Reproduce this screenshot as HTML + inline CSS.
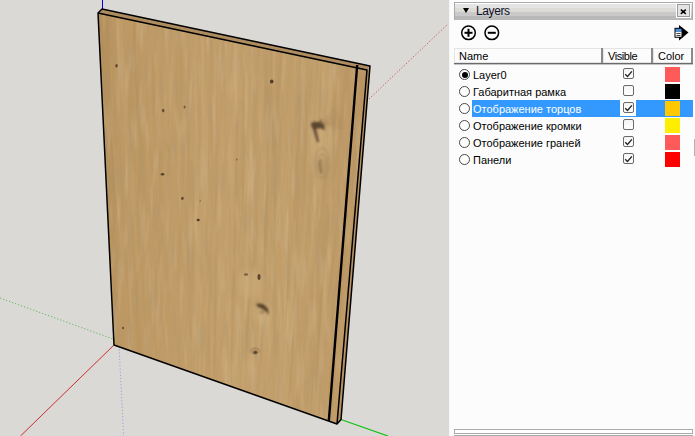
<!DOCTYPE html>
<html><head><meta charset="utf-8">
<style>
*{margin:0;padding:0;box-sizing:border-box}
html,body{width:695px;height:436px;overflow:hidden;background:#fcfcfc;font-family:"Liberation Sans",sans-serif}
#vp{position:absolute;left:0;top:0;width:449px;height:436px;background:#dad9d5}
#sep{position:absolute;left:449px;top:0;width:1px;height:436px;background:#f6f6f6}
#panel{position:absolute;left:450px;top:0;width:245px;height:436px;background:#fcfcfc}
.abs{position:absolute}
#hdr{left:454px;top:2px;width:239px;height:18px;border:1px solid #ababab;border-bottom:none;background:linear-gradient(#fff 0,#fff 1px,#e4e4e4 1px,#e4e4e4 5px,#dcdbd6 5px,#dcdbd6 9px,#c9c9c9 9px,#c9c9c9 13px,#b9b9b9 13px,#b9b9b9 17px)}
#hdr .tri{position:absolute;left:7.5px;top:5px;width:0;height:0;border-left:3.5px solid transparent;border-right:3.5px solid transparent;border-top:5px solid #000}
#hdr .ttl{position:absolute;left:21px;top:0px;font-size:12px;letter-spacing:-0.4px;color:#10102a;line-height:16px}
#close{left:676px;top:3px;width:15px;height:15px;border:1px solid #fff;background:#e4e4e4;outline:1px solid #9a9a9a;outline-offset:-2px}
.txt{position:absolute;font-size:11px;line-height:13px;color:#000;white-space:nowrap}
#colhdr{left:454px;top:48px;width:239px;height:16px;border-bottom:1px solid #6a6a6a;box-shadow:0 1px 0 #c4c4c4}
.ch{position:absolute;top:0;height:15px;background:#fcfcfc;border:1px solid #e4e4e4}
.row{position:absolute;left:454px;width:239px;height:17px}
.radio{position:absolute;left:5px;top:3px;width:11px;height:11px;border-radius:50%;border:1px solid #474747;background:#fff}
.radio.on::after{content:"";position:absolute;left:1.5px;top:1.5px;width:6px;height:6px;border-radius:50%;background:#000}
.cb{position:absolute;left:169px;top:2px;width:11px;height:11px;border:1px solid #6a6a6a;border-radius:2px;background:linear-gradient(#f4f4f4,#fff)}
.sw{position:absolute;left:211px;top:1px;width:15px;height:15px}
.lbl{position:absolute;left:18px;top:2px;font-size:11px;line-height:15px;color:#000;white-space:nowrap;padding:0 1px}
</style></head><body>
<div id="vp">
<svg width="448" height="436" viewBox="0 0 448 436" style="position:absolute;left:0;top:0">
 <defs>
  <linearGradient id="wg" gradientUnits="userSpaceOnUse" x1="100" y1="0" x2="365" y2="0">
   <stop offset="0" stop-color="#b48f5c"/>
   <stop offset="0.07" stop-color="#bd9863"/>
   <stop offset="0.5" stop-color="#c39f6b"/>
   <stop offset="0.9" stop-color="#c09c68"/>
   <stop offset="1" stop-color="#b99462"/>
  </linearGradient>
 </defs>
 <!-- axes -->
 <line x1="102.5" y1="0" x2="102.5" y2="10" stroke="#0000e0" stroke-width="1"/>
 <line x1="114" y1="345" x2="20.5" y2="436" stroke="#c83030" stroke-width="1"/>
 <line x1="0" y1="298" x2="113" y2="339" stroke="#60b860" stroke-width="1" stroke-dasharray="1.2 2"/>
 <line x1="119" y1="346" x2="123.6" y2="436" stroke="#a0a0e4" stroke-width="1" stroke-dasharray="1.2 2"/>
 <line x1="369" y1="99" x2="448" y2="24" stroke="#c85050" stroke-width="1" stroke-dasharray="1.2 2"/>
 <line x1="341" y1="419.5" x2="388" y2="436" stroke="#10c010" stroke-width="1.2"/>
 <!-- panel -->
 <polygon points="98,13 367,70 337,424 114,345" fill="url(#wg)"/>
<!--WOOD-->
<clipPath id="fc"><polygon points="98,13 367,70 337,424 114,345"/></clipPath>
<g clip-path="url(#fc)">
<path d="M183.6,83.7 L183.2,97.5 L182.8,111.3 L182.5,125.1 L182.2,138.9 L182.1,152.7 L182.1,166.6 L182.2,180.5 L182.4,194.4 L182.9,194.5 L183.2,180.8 L183.5,167.0 L183.8,153.2 L184.0,139.3 L184.2,125.5 L184.2,111.6 L184.2,97.7 L184.2,83.8Z" fill="#d8c090" opacity="0.06"/>
<path d="M215.1,119.8 L213.4,159.0 L211.4,198.1 L209.6,237.2 L208.4,276.5 L208.1,316.1 L208.6,355.9 L209.6,395.9 L210.5,436.0 L210.9,436.1 L210.2,396.1 L209.5,356.2 L209.2,316.4 L209.6,276.9 L210.7,237.6 L212.4,198.4 L214.1,159.2 L215.5,119.8Z" fill="#a6885a" opacity="0.10"/>
<path d="M257.5,6.0 L256.2,32.4 L254.8,58.7 L253.1,85.0 L251.5,111.2 L249.9,137.5 L248.5,163.8 L247.2,190.1 L246.3,216.5 L247.3,216.8 L249.2,190.6 L251.2,164.5 L253.2,138.3 L255.0,112.1 L256.6,85.7 L257.7,59.3 L258.3,32.8 L258.6,6.2Z" fill="#d8c090" opacity="0.06"/>
<path d="M324.5,4.8 L322.5,27.4 L320.5,49.9 L318.6,72.5 L316.9,95.1 L315.4,117.7 L314.0,140.4 L312.7,163.1 L311.6,185.8 L312.2,186.0 L313.9,163.4 L315.6,140.8 L317.3,118.2 L319.0,95.6 L320.6,72.9 L322.2,50.3 L323.7,27.6 L325.1,4.9Z" fill="#d8c090" opacity="0.12"/>
<path d="M276.5,152.1 L275.6,171.6 L275.1,191.2 L274.7,210.8 L274.3,230.4 L273.7,249.9 L272.8,269.4 L271.7,288.8 L270.5,308.2 L271.6,308.5 L273.7,289.4 L275.6,270.2 L277.0,250.9 L277.9,231.4 L278.1,211.7 L278.0,191.9 L277.7,172.1 L277.7,152.4Z" fill="#a6885a" opacity="0.11"/>
<path d="M251.9,77.8 L250.5,117.0 L249.0,156.2 L247.6,195.3 L246.1,234.5 L244.7,273.7 L243.5,312.9 L242.4,352.2 L241.5,391.5 L242.6,391.9 L244.6,353.0 L246.7,313.9 L248.6,274.9 L250.3,235.7 L251.6,196.4 L252.5,157.0 L253.0,117.6 L253.3,78.1Z" fill="#d8c090" opacity="0.13"/>
<path d="M133.1,27.0 L133.0,64.9 L136.2,103.5 L139.0,142.1 L138.6,179.9 L137.3,217.4 L138.6,255.6 L142.7,294.7 L145.6,333.6 L146.7,333.9 L144.8,295.4 L141.7,256.6 L141.0,218.5 L142.6,181.0 L142.9,143.1 L139.5,104.3 L135.4,65.4 L134.4,27.3Z" fill="#a6885a" opacity="0.12"/>
<path d="M263.1,-6.8 L259.0,37.6 L253.6,81.7 L251.3,126.4 L252.7,172.0 L253.8,217.6 L251.4,262.3 L247.4,306.5 L245.6,351.3 L246.9,351.7 L249.9,307.3 L255.0,263.4 L258.1,218.8 L257.4,173.2 L255.9,127.5 L257.5,82.6 L261.9,38.2 L264.6,-6.5Z" fill="#a6885a" opacity="0.14"/>
<path d="M269.5,92.3 L267.8,110.7 L266.2,129.2 L265.0,147.7 L264.2,166.2 L263.8,185.0 L263.8,203.8 L264.1,222.7 L264.5,241.6 L266.7,242.3 L268.3,223.8 L269.7,205.4 L270.9,186.8 L271.7,168.2 L272.2,149.4 L272.3,130.6 L272.2,111.8 L271.9,92.9Z" fill="#d8c090" opacity="0.08"/>
<path d="M124.2,-29.1 L125.2,3.0 L125.5,35.0 L125.8,66.9 L126.8,99.0 L128.6,131.3 L130.5,163.6 L131.6,195.7 L132.2,227.7 L132.5,227.8 L132.3,195.9 L131.4,163.8 L129.7,131.5 L128.0,99.3 L126.9,67.1 L126.5,35.2 L126.0,3.2 L124.5,-29.0Z" fill="#d8c090" opacity="0.06"/>
<path d="M240.7,188.2 L239.4,220.7 L238.3,253.4 L237.4,286.0 L236.5,318.7 L235.7,351.5 L234.9,384.2 L234.3,417.0 L233.9,449.8 L235.6,450.5 L237.7,418.2 L239.7,385.9 L241.5,353.4 L242.7,320.7 L243.4,287.9 L243.4,254.9 L243.1,221.8 L242.7,188.7Z" fill="#d8c090" opacity="0.15"/>
<path d="M133.5,-45.1 L133.3,-13.5 L133.2,18.0 L133.4,49.7 L134.1,81.4 L135.3,113.3 L137.0,145.3 L138.9,177.3 L140.8,209.4 L141.4,209.6 L140.0,177.6 L138.5,145.7 L137.2,113.7 L136.1,81.9 L135.3,50.1 L134.8,18.4 L134.5,-13.3 L134.1,-45.0Z" fill="#a6885a" opacity="0.08"/>
<path d="M196.5,-21.3 L193.5,31.4 L192.6,84.6 L194.3,138.3 L194.7,191.8 L192.8,244.6 L192.3,297.8 L194.4,351.8 L195.8,405.7 L197.0,406.2 L196.7,352.6 L195.7,298.9 L197.0,245.8 L199.2,193.0 L198.7,139.4 L196.4,85.4 L196.3,32.0 L198.0,-21.0Z" fill="#d8c090" opacity="0.13"/>
<path d="M312.0,3.0 L310.5,19.1 L309.3,35.3 L308.4,51.5 L307.7,67.7 L307.2,84.0 L306.8,100.4 L306.4,116.7 L306.0,133.0 L308.1,133.5 L310.4,117.6 L312.4,101.6 L313.9,85.5 L314.8,69.3 L315.2,52.9 L315.1,36.5 L314.7,20.0 L314.2,3.5Z" fill="#d8c090" opacity="0.09"/>
<path d="M151.1,42.5 L151.1,56.0 L151.2,69.4 L151.3,82.9 L151.6,96.4 L151.9,110.0 L152.3,123.5 L152.8,137.1 L153.4,150.7 L153.9,150.8 L153.9,137.3 L153.8,123.9 L153.7,110.4 L153.5,96.9 L153.2,83.3 L152.7,69.8 L152.2,56.2 L151.7,42.6Z" fill="#a6885a" opacity="0.06"/>
<path d="M325.9,201.9 L322.6,236.9 L319.5,272.0 L316.9,307.1 L314.6,342.4 L312.7,377.8 L310.9,413.3 L309.3,448.9 L307.6,484.4 L308.9,484.9 L311.7,449.8 L314.4,414.5 L316.9,379.2 L319.2,343.9 L321.3,308.5 L323.3,273.1 L325.3,237.7 L327.4,202.3Z" fill="#a6885a" opacity="0.08"/>
<path d="M223.5,9.7 L223.0,23.5 L222.4,37.2 L221.8,50.9 L221.1,64.6 L220.6,78.4 L220.2,92.1 L220.1,105.9 L220.1,119.8 L221.4,120.1 L222.5,106.5 L223.6,92.9 L224.6,79.3 L225.4,65.6 L225.8,51.8 L225.8,37.9 L225.5,24.0 L224.8,10.0Z" fill="#a6885a" opacity="0.06"/>
<path d="M346.5,210.9 L343.6,239.3 L340.8,267.6 L338.2,296.0 L335.8,324.4 L333.7,352.9 L331.8,381.5 L329.9,410.1 L328.1,438.8 L329.2,439.2 L332.1,410.9 L334.9,382.6 L337.5,354.2 L339.9,325.7 L342.1,297.1 L344.1,268.5 L346.0,239.9 L347.8,211.3Z" fill="#a6885a" opacity="0.11"/>
<path d="M163.2,12.1 L163.8,57.0 L165.3,102.2 L166.9,147.4 L167.8,192.4 L167.9,237.2 L167.5,281.9 L167.5,326.7 L168.4,371.7 L169.3,372.0 L169.2,327.2 L169.9,282.7 L170.8,238.1 L171.0,193.3 L170.0,148.2 L168.0,102.8 L165.8,57.4 L164.3,12.3Z" fill="#a6885a" opacity="0.13"/>
<path d="M367.9,87.8 L365.5,101.9 L363.0,116.0 L360.6,130.1 L358.5,144.3 L356.7,158.5 L355.4,172.8 L354.4,187.2 L353.8,201.7 L355.7,202.2 L358.1,188.2 L360.6,174.1 L363.1,160.0 L365.2,145.9 L367.0,131.6 L368.4,117.3 L369.4,102.8 L370.0,88.3Z" fill="#d8c090" opacity="0.14"/>
<path d="M109.6,177.2 L107.9,205.0 L107.1,233.0 L109.1,261.8 L112.9,291.3 L116.2,320.6 L117.1,349.1 L116.3,377.0 L116.2,405.0 L116.9,405.3 L117.6,377.4 L119.0,349.7 L118.4,321.3 L115.4,292.1 L111.4,262.6 L109.1,233.6 L109.3,205.5 L110.4,177.5Z" fill="#a6885a" opacity="0.13"/>
<path d="M194.6,165.5 L193.9,188.5 L193.1,211.5 L192.7,234.5 L192.7,257.7 L193.2,281.0 L193.7,304.3 L194.1,327.6 L194.3,350.9 L194.9,351.1 L195.3,328.0 L195.4,304.9 L195.1,281.6 L194.9,258.3 L194.8,235.1 L194.9,212.0 L195.1,188.8 L195.3,165.7Z" fill="#a6885a" opacity="0.07"/>
<path d="M272.4,97.0 L272.3,116.1 L271.8,135.0 L270.8,153.9 L269.3,172.6 L267.5,191.3 L265.7,209.9 L264.3,228.6 L263.7,247.5 L265.4,248.0 L267.8,229.6 L270.6,211.2 L273.3,192.8 L275.5,174.2 L276.8,155.4 L276.9,136.3 L275.9,116.9 L274.3,97.4Z" fill="#a6885a" opacity="0.12"/>
<path d="M306.5,166.0 L305.7,183.6 L304.8,201.1 L303.6,218.6 L302.2,236.0 L300.6,253.3 L299.1,270.7 L297.9,288.2 L297.1,305.7 L297.9,306.0 L299.5,288.6 L301.4,271.4 L303.4,254.1 L305.1,236.8 L306.4,219.3 L307.2,201.7 L307.4,184.0 L307.4,166.2Z" fill="#d8c090" opacity="0.16"/>
<path d="M131.1,106.4 L131.3,128.2 L131.4,150.0 L131.9,171.8 L132.6,193.7 L133.7,215.7 L134.8,237.8 L135.9,259.8 L136.7,281.7 L137.2,281.9 L136.8,260.1 L136.2,238.2 L135.3,216.2 L134.3,194.2 L133.5,172.2 L132.9,150.3 L132.3,128.5 L131.6,106.5Z" fill="#d8c090" opacity="0.14"/>
<path d="M242.9,79.5 L243.0,122.6 L244.0,165.9 L241.7,208.4 L238.1,250.4 L237.6,293.3 L239.0,336.9 L237.8,379.7 L234.6,421.7 L235.0,421.8 L238.7,380.0 L240.2,337.3 L239.0,293.8 L239.7,250.9 L243.2,208.8 L245.3,166.2 L244.0,122.8 L243.4,79.7Z" fill="#a6885a" opacity="0.16"/>
<path d="M320.6,93.3 L319.1,111.0 L317.7,128.7 L316.4,146.4 L315.3,164.2 L314.4,182.0 L313.6,199.9 L312.9,217.8 L312.3,235.7 L312.9,235.9 L314.2,218.1 L315.4,200.3 L316.5,182.6 L317.6,164.8 L318.6,146.9 L319.5,129.1 L320.4,111.3 L321.3,93.5Z" fill="#a6885a" opacity="0.08"/>
<path d="M340.0,118.3 L337.9,149.1 L337.8,180.4 L337.3,211.6 L334.4,242.2 L329.8,272.3 L325.7,302.5 L324.0,333.5 L324.4,365.0 L325.2,365.3 L325.7,334.0 L328.1,303.2 L332.6,273.2 L337.5,243.1 L340.3,212.4 L340.3,181.0 L339.7,149.5 L341.0,118.6Z" fill="#a6885a" opacity="0.11"/>
<path d="M237.9,88.0 L236.9,124.8 L235.9,161.6 L235.0,198.4 L234.1,235.2 L233.3,272.0 L232.5,308.8 L231.7,345.7 L230.9,382.5 L231.2,382.6 L232.1,345.8 L233.1,309.1 L234.1,272.3 L235.0,235.4 L235.8,198.6 L236.6,161.8 L237.4,124.9 L238.1,88.1Z" fill="#a6885a" opacity="0.07"/>
<path d="M249.2,36.0 L249.1,60.1 L248.4,84.1 L247.0,107.8 L245.2,131.5 L243.2,155.1 L241.6,178.8 L240.7,202.7 L240.6,226.7 L241.5,227.0 L242.4,203.1 L244.0,179.4 L246.0,155.8 L248.2,132.2 L250.0,108.5 L250.9,84.6 L250.9,60.5 L250.1,36.2Z" fill="#a6885a" opacity="0.11"/>
<path d="M302.5,110.7 L299.9,140.2 L298.9,170.1 L298.9,200.3 L298.8,230.5 L297.8,260.5 L295.5,290.1 L292.4,319.4 L289.5,348.8 L290.7,349.2 L294.6,320.1 L298.6,291.0 L301.6,261.6 L302.9,231.6 L302.9,201.3 L302.3,171.0 L302.3,140.8 L303.8,111.0Z" fill="#d8c090" opacity="0.13"/>
<path d="M277.8,212.3 L275.1,229.7 L273.1,247.4 L272.2,265.3 L272.3,283.6 L273.1,302.0 L274.0,320.6 L274.5,339.0 L274.2,357.2 L275.3,357.5 L276.5,339.6 L276.8,321.5 L276.5,303.1 L275.9,284.6 L275.7,266.3 L276.1,248.2 L277.2,230.3 L279.0,212.6Z" fill="#a6885a" opacity="0.10"/>
<path d="M248.5,34.0 L247.0,49.6 L245.6,65.2 L244.5,80.9 L243.8,96.7 L243.5,112.5 L243.6,128.5 L244.0,144.5 L244.5,160.6 L246.6,161.1 L248.1,145.5 L249.5,129.9 L250.6,114.2 L251.3,98.4 L251.6,82.5 L251.6,66.5 L251.3,50.5 L250.8,34.4Z" fill="#d8c090" opacity="0.07"/>
<path d="M272.1,196.1 L270.8,229.4 L269.6,262.7 L268.3,295.9 L267.0,329.2 L265.6,362.4 L264.2,395.7 L262.7,428.9 L261.2,462.0 L262.7,462.6 L265.7,430.0 L268.5,397.2 L270.8,364.2 L272.6,331.0 L273.7,297.6 L274.2,264.0 L274.2,230.3 L273.9,196.6Z" fill="#d8c090" opacity="0.07"/>
<path d="M151.8,58.6 L152.6,88.5 L153.7,118.6 L154.8,148.6 L156.0,178.7 L157.1,208.8 L158.1,238.8 L158.8,268.8 L159.4,298.7 L161.4,299.4 L162.7,270.0 L163.6,240.4 L163.8,210.6 L163.1,180.6 L161.7,150.4 L159.5,120.0 L156.9,89.5 L154.1,59.1Z" fill="#a6885a" opacity="0.10"/>
<path d="M187.1,-31.7 L186.8,-3.7 L186.6,24.2 L186.4,52.2 L186.4,80.2 L186.6,108.2 L186.8,136.3 L187.2,164.3 L187.5,192.4 L188.2,192.6 L188.4,164.6 L188.5,136.7 L188.6,108.7 L188.6,80.7 L188.5,52.7 L188.4,24.6 L188.1,-3.5 L187.8,-31.5Z" fill="#a6885a" opacity="0.13"/>
<path d="M266.1,43.7 L265.4,58.2 L264.8,72.7 L264.3,87.3 L264.1,101.8 L264.0,116.5 L264.1,131.2 L264.3,145.9 L264.6,160.6 L265.8,160.9 L266.8,146.5 L267.6,132.0 L268.2,117.5 L268.5,102.9 L268.5,88.2 L268.3,73.5 L267.9,58.7 L267.4,44.0Z" fill="#a6885a" opacity="0.16"/>
<path d="M309.1,24.0 L306.5,77.1 L305.3,130.6 L304.1,184.1 L301.5,237.3 L297.3,290.1 L292.3,342.5 L288.0,395.1 L285.2,448.2 L285.9,448.5 L289.3,395.6 L294.2,343.2 L299.6,290.8 L304.1,238.0 L306.6,184.7 L307.4,131.1 L308.0,77.5 L309.9,24.2Z" fill="#a6885a" opacity="0.10"/>
<path d="M244.7,202.4 L243.2,227.2 L242.0,252.0 L241.1,277.0 L240.6,302.0 L240.5,327.2 L240.6,352.5 L241.0,377.9 L241.4,403.4 L242.8,403.9 L243.8,378.9 L244.6,353.9 L245.3,328.8 L245.7,303.6 L246.0,278.5 L246.2,253.2 L246.3,228.0 L246.4,202.8Z" fill="#a6885a" opacity="0.06"/>
<path d="M310.6,124.3 L307.3,166.1 L305.5,208.3 L304.6,250.8 L303.7,293.3 L301.8,335.5 L298.7,377.4 L294.7,418.9 L290.7,460.4 L291.0,460.5 L295.3,419.1 L299.6,377.7 L303.0,335.9 L305.0,293.6 L305.8,251.1 L306.5,208.6 L308.1,166.3 L311.0,124.4Z" fill="#d8c090" opacity="0.06"/>
<path d="M167.3,7.9 L167.4,33.1 L167.6,58.4 L167.8,83.7 L168.0,108.9 L168.3,134.2 L168.7,159.5 L169.2,184.8 L169.6,210.2 L170.1,210.3 L170.1,185.1 L170.0,159.9 L169.9,134.6 L169.7,109.3 L169.4,84.0 L169.0,58.7 L168.4,33.4 L167.8,8.0Z" fill="#a6885a" opacity="0.08"/>
<path d="M177.4,21.5 L176.6,34.6 L176.0,47.7 L175.6,60.9 L175.4,74.1 L175.7,87.4 L176.2,100.8 L176.9,114.3 L177.7,127.7 L179.5,128.2 L180.3,115.1 L181.0,102.0 L181.5,88.8 L181.6,75.5 L181.5,62.2 L181.0,48.8 L180.2,35.4 L179.3,21.9Z" fill="#a6885a" opacity="0.11"/>
<path d="M298.0,91.5 L294.1,121.2 L289.4,150.7 L286.2,180.5 L285.5,210.9 L286.5,241.9 L287.1,272.8 L285.9,303.1 L282.9,332.9 L284.1,333.3 L288.3,303.9 L290.6,273.8 L290.6,243.0 L289.9,212.1 L290.4,181.6 L293.1,151.6 L296.8,121.9 L299.5,91.8Z" fill="#a6885a" opacity="0.10"/>
<path d="M316.5,164.0 L316.5,194.5 L316.5,225.0 L314.5,255.1 L310.6,284.5 L306.2,313.8 L303.5,343.5 L303.1,374.0 L304.0,405.0 L304.9,405.3 L304.9,374.6 L306.0,344.3 L309.3,314.7 L313.9,285.5 L317.7,256.0 L319.2,225.7 L318.5,195.0 L317.5,164.2Z" fill="#a6885a" opacity="0.13"/>
<path d="M205.3,6.5 L204.8,22.7 L204.3,39.0 L203.9,55.2 L203.8,71.5 L203.8,87.9 L204.0,104.3 L204.3,120.7 L204.6,137.1 L205.6,137.4 L206.1,121.1 L206.5,104.9 L206.8,88.6 L207.0,72.3 L207.0,55.9 L206.9,39.5 L206.7,23.1 L206.4,6.7Z" fill="#a6885a" opacity="0.06"/>
<path d="M329.7,30.2 L326.6,62.5 L323.4,94.7 L320.2,127.0 L317.5,159.3 L315.4,191.8 L313.9,224.4 L312.9,257.2 L312.1,290.1 L314.0,290.7 L316.6,258.3 L319.1,225.8 L321.7,193.4 L324.3,161.0 L326.8,128.5 L329.0,96.0 L330.7,63.3 L331.9,30.6Z" fill="#d8c090" opacity="0.08"/>
<path d="M165.4,44.0 L164.7,56.5 L164.2,69.0 L163.9,81.6 L164.0,94.3 L164.5,107.0 L165.3,119.9 L166.3,132.8 L167.4,145.7 L169.6,146.3 L170.5,133.8 L171.2,121.3 L171.5,108.7 L171.5,96.0 L171.1,83.3 L170.2,70.4 L169.1,57.4 L167.7,44.5Z" fill="#d8c090" opacity="0.11"/>
<path d="M197.8,-12.5 L197.8,17.9 L198.1,48.3 L198.3,78.8 L198.5,109.2 L198.6,139.6 L198.4,170.0 L198.2,200.4 L197.8,230.7 L199.0,231.0 L200.4,201.0 L201.6,170.8 L202.4,140.6 L202.6,110.2 L202.3,79.7 L201.4,49.0 L200.3,18.4 L199.1,-12.3Z" fill="#a6885a" opacity="0.07"/>
<path d="M107.5,100.7 L110.4,132.6 L112.4,164.3 L112.9,195.5 L112.7,226.6 L113.2,257.8 L115.2,289.4 L118.1,321.4 L120.8,353.4 L121.0,353.5 L118.6,321.6 L115.8,289.7 L114.0,258.0 L113.6,226.8 L113.7,195.8 L113.1,164.5 L110.9,132.7 L107.8,100.8Z" fill="#a6885a" opacity="0.08"/>
<path d="M342.3,4.3 L337.6,56.6 L333.7,108.9 L330.3,161.5 L326.5,213.9 L322.3,266.2 L318.6,318.6 L315.7,371.3 L312.8,424.0 L313.7,424.3 L317.5,371.9 L321.2,319.4 L325.4,267.1 L329.9,214.8 L333.5,162.3 L336.5,109.6 L339.6,57.0 L343.4,4.5Z" fill="#a6885a" opacity="0.16"/>
<path d="M331.5,199.9 L328.8,231.2 L326.1,262.5 L323.4,293.8 L320.8,325.2 L318.4,356.5 L316.3,388.0 L314.5,419.6 L313.0,451.3 L314.3,451.8 L317.0,420.5 L319.9,389.2 L322.8,358.0 L325.5,326.6 L327.9,295.2 L330.0,263.6 L331.6,232.0 L333.0,200.3Z" fill="#d8c090" opacity="0.14"/>
<path d="M327.5,23.7 L325.1,52.6 L322.7,81.6 L320.3,110.5 L318.0,139.4 L315.9,168.4 L313.8,197.4 L311.9,226.5 L310.1,255.5 L311.5,255.9 L314.6,227.2 L317.6,198.4 L320.4,169.6 L322.9,140.6 L325.0,111.6 L326.7,82.4 L328.0,53.2 L329.0,24.0Z" fill="#d8c090" opacity="0.13"/>
<path d="M119.4,-48.0 L118.0,0.4 L118.5,49.2 L121.5,98.5 L125.0,147.9 L126.9,197.0 L127.4,245.7 L128.5,294.5 L131.6,344.0 L133.4,344.6 L131.9,295.6 L132.3,247.2 L132.9,198.7 L131.4,149.6 L127.7,100.0 L123.9,50.4 L122.0,1.3 L121.5,-47.6Z" fill="#d8c090" opacity="0.12"/>
<path d="M303.9,4.5 L301.9,29.6 L300.0,54.6 L298.4,79.8 L297.0,104.9 L295.8,130.2 L294.9,155.5 L294.1,180.8 L293.3,206.2 L294.6,206.5 L296.4,181.4 L298.2,156.3 L299.9,131.1 L301.3,105.9 L302.5,80.7 L303.6,55.4 L304.5,30.1 L305.3,4.8Z" fill="#a6885a" opacity="0.12"/>
<path d="M289.8,151.7 L288.0,185.4 L286.9,219.4 L286.1,253.4 L285.0,287.4 L283.3,321.2 L281.0,354.9 L278.5,388.4 L276.3,422.0 L276.8,422.3 L279.6,388.8 L282.5,355.4 L285.2,321.8 L287.0,288.0 L288.1,254.0 L288.6,219.8 L289.3,185.8 L290.5,151.8Z" fill="#d8c090" opacity="0.16"/>
<path d="M261.6,116.4 L260.6,129.6 L259.7,142.9 L259.0,156.1 L258.6,169.5 L258.4,182.9 L258.4,196.4 L258.6,209.9 L258.8,223.4 L260.3,223.8 L261.5,210.7 L262.5,197.4 L263.2,184.2 L263.7,170.8 L263.9,157.4 L263.9,143.9 L263.6,130.3 L263.2,116.8Z" fill="#a6885a" opacity="0.07"/>
<path d="M111.6,57.2 L111.0,84.3 L110.9,111.5 L111.6,138.9 L113.3,166.5 L115.7,194.4 L118.3,222.3 L120.5,250.1 L122.1,277.8 L122.8,278.0 L121.9,250.6 L120.2,222.9 L118.0,195.0 L115.8,167.2 L114.0,139.5 L112.9,112.0 L112.5,84.7 L112.4,57.4Z" fill="#d8c090" opacity="0.13"/>
<path d="M129.6,143.8 L127.8,176.8 L127.0,210.0 L127.9,243.7 L130.4,277.8 L133.7,312.3 L136.7,346.7 L138.6,380.8 L139.3,414.5 L141.1,415.2 L142.0,382.1 L141.5,348.4 L139.6,314.3 L136.8,279.9 L134.0,245.5 L132.3,211.5 L131.7,177.8 L131.7,144.3Z" fill="#a6885a" opacity="0.16"/>
<path d="M216.6,95.3 L215.7,137.9 L215.0,180.5 L214.6,223.2 L214.3,265.9 L214.1,308.7 L213.8,351.4 L213.4,394.2 L213.0,436.9 L213.6,437.1 L214.7,394.6 L215.7,352.0 L216.3,309.4 L216.7,266.6 L216.9,223.8 L217.0,181.0 L217.1,138.2 L217.4,95.5Z" fill="#a6885a" opacity="0.15"/>
<path d="M130.3,66.5 L128.9,79.4 L127.8,92.3 L127.3,105.4 L127.6,118.7 L128.6,132.2 L130.3,145.8 L132.4,159.6 L134.6,173.4 L136.5,173.9 L136.0,160.5 L135.4,147.1 L134.7,133.7 L134.0,120.3 L133.4,106.9 L133.0,93.6 L132.6,80.2 L132.3,66.9Z" fill="#a6885a" opacity="0.15"/>
<path d="M99.1,140.5 L99.2,152.9 L99.4,165.2 L99.8,177.6 L100.4,190.1 L101.2,202.6 L102.2,215.1 L103.4,227.8 L104.6,240.4 L105.8,240.8 L105.6,228.4 L105.3,216.1 L104.9,203.6 L104.3,191.2 L103.5,178.6 L102.6,166.1 L101.5,153.5 L100.3,140.9Z" fill="#a6885a" opacity="0.08"/>
<path d="M299.9,77.1 L298.5,104.6 L297.2,132.1 L295.9,159.6 L294.4,187.0 L292.9,214.5 L291.3,241.9 L289.6,269.3 L288.0,296.7 L289.9,297.2 L293.1,270.3 L296.3,243.3 L298.9,216.1 L300.9,188.7 L302.1,161.1 L302.5,133.3 L302.4,105.5 L301.9,77.6Z" fill="#a6885a" opacity="0.15"/>
<path d="M360.3,207.3 L357.8,226.9 L355.5,246.5 L353.3,266.2 L351.3,285.9 L349.5,305.7 L348.0,325.6 L346.6,345.5 L345.3,365.4 L346.6,365.9 L349.1,346.3 L351.5,326.7 L353.8,307.0 L355.8,287.3 L357.6,267.5 L359.2,247.6 L360.5,227.6 L361.7,207.7Z" fill="#a6885a" opacity="0.10"/>
<path d="M342.9,215.3 L340.1,245.6 L336.9,275.9 L333.9,306.1 L331.5,336.6 L329.7,367.2 L327.9,397.9 L325.7,428.4 L323.1,458.8 L323.7,459.1 L326.9,428.9 L329.6,398.5 L331.8,367.9 L333.8,337.3 L336.1,306.8 L338.8,276.4 L341.4,246.0 L343.6,215.4Z" fill="#a6885a" opacity="0.11"/>
<path d="M268.8,89.5 L265.3,127.6 L260.7,165.3 L257.8,203.3 L257.6,242.1 L258.5,281.3 L258.1,320.1 L255.7,358.3 L253.3,396.4 L255.1,397.1 L259.3,359.5 L263.2,321.7 L264.8,283.2 L264.3,244.1 L264.3,205.1 L266.3,166.7 L269.3,128.5 L270.9,90.0Z" fill="#d8c090" opacity="0.11"/>
<path d="M272.4,52.9 L270.1,94.3 L268.0,135.6 L266.2,177.1 L264.7,218.6 L263.4,260.2 L262.1,301.8 L260.7,343.4 L259.2,385.0 L259.9,385.2 L262.1,343.9 L264.2,302.5 L265.9,260.9 L267.4,219.4 L268.8,177.8 L270.2,136.2 L271.7,94.6 L273.3,53.1Z" fill="#a6885a" opacity="0.15"/>
<path d="M369.5,39.2 L367.0,61.5 L364.3,83.6 L361.8,105.8 L359.3,128.0 L357.0,150.3 L354.9,172.5 L353.0,194.9 L351.3,217.2 L352.1,217.4 L354.5,195.2 L357.0,173.1 L359.5,150.9 L361.9,128.6 L364.3,106.4 L366.5,84.1 L368.5,61.8 L370.4,39.4Z" fill="#d8c090" opacity="0.08"/>
<path d="M349.0,42.8 L346.5,59.6 L344.0,76.4 L341.8,93.3 L339.7,110.2 L338.0,127.1 L336.5,144.1 L335.2,161.1 L334.2,178.2 L335.4,178.6 L337.6,161.7 L339.8,144.9 L342.0,128.0 L344.0,111.1 L345.9,94.2 L347.5,77.2 L349.0,60.1 L350.3,43.1Z" fill="#a6885a" opacity="0.15"/>
<path d="M188.5,62.3 L189.5,89.5 L189.6,116.5 L188.7,143.3 L187.3,169.9 L186.4,196.6 L186.5,223.5 L187.6,250.8 L189.1,278.2 L189.5,278.3 L188.4,251.0 L187.6,223.8 L187.7,196.9 L188.7,170.2 L190.0,143.6 L190.7,116.8 L190.3,89.7 L188.9,62.4Z" fill="#a6885a" opacity="0.08"/>
<path d="M237.9,95.3 L236.9,128.3 L235.9,161.3 L234.9,194.4 L234.0,227.4 L233.0,260.5 L232.2,293.5 L231.5,326.6 L230.8,359.8 L231.7,360.1 L233.2,327.2 L234.7,294.3 L236.0,261.3 L237.2,228.3 L238.0,195.2 L238.6,162.0 L238.9,128.8 L238.9,95.5Z" fill="#a6885a" opacity="0.06"/>
<path d="M325.2,201.7 L322.3,234.1 L318.6,266.2 L315.5,298.5 L313.8,331.2 L312.8,364.2 L311.1,396.9 L308.3,429.3 L305.3,461.6 L305.8,461.8 L309.4,429.7 L312.7,397.5 L314.7,364.8 L315.9,331.9 L317.5,299.1 L320.3,266.7 L323.6,234.4 L325.9,201.8Z" fill="#a6885a" opacity="0.08"/>
<path d="M98.7,37.5 L100.4,81.6 L102.3,125.7 L104.5,170.0 L107.0,214.3 L109.7,258.6 L112.4,303.0 L115.1,347.5 L117.7,391.9 L118.0,392.0 L115.6,347.7 L113.1,303.3 L110.5,258.9 L108.0,214.5 L105.4,170.2 L103.1,125.9 L100.9,81.7 L99.0,37.5Z" fill="#d8c090" opacity="0.15"/>
<path d="M316.3,157.8 L312.7,196.3 L309.5,234.9 L306.7,273.6 L304.4,312.4 L302.3,351.3 L300.2,390.2 L298.2,429.2 L296.2,468.2 L297.9,468.8 L301.4,430.3 L304.9,391.8 L308.0,353.1 L310.5,314.3 L312.7,275.3 L314.6,236.3 L316.4,197.3 L318.3,158.3Z" fill="#d8c090" opacity="0.08"/>
<path d="M294.1,41.5 L292.8,92.3 L288.4,142.4 L283.5,192.3 L282.0,243.1 L281.6,294.3 L278.6,344.7 L274.6,394.7 L273.4,445.7 L274.7,446.2 L277.3,395.6 L282.3,345.9 L286.2,295.7 L286.9,244.5 L288.3,193.6 L292.6,143.4 L295.9,93.0 L295.8,41.8Z" fill="#d8c090" opacity="0.10"/>
<path d="M273.6,-2.4 L271.2,34.2 L269.1,70.9 L267.6,107.7 L266.6,144.6 L266.0,181.6 L265.6,218.7 L265.2,255.9 L264.6,293.0 L265.4,293.3 L266.7,256.3 L267.8,219.4 L268.7,182.3 L269.5,145.3 L270.4,108.3 L271.5,71.4 L272.9,34.6 L274.6,-2.2Z" fill="#a6885a" opacity="0.08"/>
<path d="M250.0,208.8 L248.8,233.5 L247.7,258.3 L246.7,283.0 L245.8,307.9 L245.1,332.7 L244.6,357.6 L244.1,382.6 L243.7,407.6 L244.6,407.9 L245.9,383.2 L247.0,358.5 L248.1,333.7 L249.0,308.8 L249.7,284.0 L250.2,259.0 L250.7,234.1 L251.0,209.1Z" fill="#a6885a" opacity="0.12"/>
<path d="M343.4,-1.0 L338.4,35.5 L334.5,72.2 L331.9,109.1 L330.6,146.3 L329.9,183.7 L329.1,221.2 L327.6,258.5 L325.0,295.5 L326.2,295.8 L329.8,259.1 L332.2,222.0 L333.7,184.7 L334.7,147.3 L335.9,110.0 L337.8,72.9 L340.9,36.0 L344.7,-0.7Z" fill="#a6885a" opacity="0.08"/>
<path d="M283.1,65.1 L281.2,93.7 L279.2,122.3 L277.1,150.9 L275.0,179.4 L273.1,208.0 L271.4,236.6 L269.8,265.3 L268.4,294.0 L269.4,294.3 L271.7,265.9 L274.2,237.4 L276.5,208.9 L278.7,180.4 L280.6,151.7 L282.1,123.0 L283.4,94.2 L284.3,65.3Z" fill="#a6885a" opacity="0.12"/>
<path d="M284.6,58.9 L280.7,102.9 L276.9,146.8 L276.2,191.6 L275.7,236.4 L272.4,280.4 L269.0,324.3 L268.6,369.2 L268.3,414.2 L268.8,414.4 L269.7,369.6 L270.6,324.8 L274.3,280.9 L277.7,236.9 L278.1,192.1 L278.6,147.3 L282.0,103.2 L285.2,59.1Z" fill="#d8c090" opacity="0.13"/>
<path d="M157.3,10.9 L156.2,39.8 L155.3,68.6 L154.8,97.6 L154.9,126.6 L155.7,155.8 L157.0,185.2 L158.8,214.8 L160.7,244.4 L161.4,244.6 L160.0,215.1 L158.8,185.7 L157.8,156.4 L157.2,127.2 L157.0,98.1 L157.2,69.1 L157.6,40.1 L158.0,11.1Z" fill="#d8c090" opacity="0.08"/>
<path d="M279.4,-5.8 L277.8,9.8 L276.4,25.4 L275.3,41.1 L274.6,56.8 L274.3,72.6 L274.3,88.6 L274.6,104.6 L275.1,120.6 L277.3,121.1 L278.9,105.5 L280.3,89.9 L281.5,74.2 L282.2,58.4 L282.6,42.6 L282.6,26.6 L282.3,10.7 L281.8,-5.4Z" fill="#a6885a" opacity="0.09"/>
<path d="M199.2,10.6 L200.7,62.3 L202.0,114.1 L201.5,165.4 L199.0,216.2 L196.5,266.9 L195.8,318.1 L197.6,370.1 L200.6,422.7 L202.4,423.4 L201.1,371.4 L200.8,319.7 L202.6,268.8 L205.7,218.1 L208.0,167.1 L207.6,115.4 L204.8,63.2 L201.4,11.0Z" fill="#d8c090" opacity="0.13"/>
<path d="M306.1,-12.7 L304.6,13.7 L303.0,40.2 L301.3,66.6 L299.5,93.0 L297.8,119.3 L296.0,145.7 L294.3,172.1 L292.7,198.5 L293.0,198.6 L294.9,172.2 L296.8,145.9 L298.7,119.6 L300.6,93.2 L302.3,66.8 L303.9,40.3 L305.2,13.8 L306.4,-12.7Z" fill="#d8c090" opacity="0.09"/>
<path d="M189.9,159.9 L189.4,182.1 L188.8,204.3 L188.2,226.5 L187.7,248.7 L187.5,270.9 L187.8,293.4 L188.6,315.9 L189.8,338.7 L191.7,339.3 L192.4,317.2 L193.2,295.1 L194.0,272.9 L194.6,250.7 L194.8,228.4 L194.4,205.9 L193.5,183.2 L192.1,160.5Z" fill="#a6885a" opacity="0.16"/>
<path d="M103.3,-44.8 L104.5,-13.9 L105.3,16.8 L105.7,47.5 L106.6,78.3 L108.3,109.3 L110.6,140.4 L112.7,171.5 L114.4,202.5 L115.5,202.8 L114.9,172.1 L113.7,141.2 L112.1,110.2 L110.7,79.3 L109.6,48.4 L108.6,17.6 L107.0,-13.4 L104.6,-44.6Z" fill="#a6885a" opacity="0.15"/>
<path d="M311.9,172.9 L308.9,208.5 L306.0,244.1 L303.3,279.8 L300.8,315.5 L298.7,351.3 L296.9,387.2 L295.3,423.2 L293.9,459.3 L295.4,459.9 L298.3,424.3 L301.2,388.7 L303.9,353.0 L306.4,317.2 L308.6,281.4 L310.6,245.4 L312.3,209.4 L313.7,173.4Z" fill="#a6885a" opacity="0.05"/>
<path d="M186.2,29.3 L185.9,42.1 L185.6,54.9 L185.5,67.7 L185.6,80.6 L185.8,93.5 L186.2,106.4 L186.7,119.4 L187.3,132.4 L188.1,132.6 L188.3,119.8 L188.4,107.0 L188.4,94.1 L188.3,81.2 L188.1,68.3 L187.8,55.4 L187.4,42.4 L187.1,29.5Z" fill="#d8c090" opacity="0.12"/>
<path d="M293.9,220.2 L291.3,250.9 L288.9,281.7 L286.8,312.5 L285.0,343.4 L283.5,374.4 L282.3,405.5 L281.3,436.7 L280.4,468.0 L282.2,468.7 L284.7,438.0 L287.2,407.3 L289.5,376.5 L291.4,345.5 L293.0,314.4 L294.2,283.3 L295.2,252.0 L295.9,220.8Z" fill="#d8c090" opacity="0.15"/>
<path d="M197.1,141.9 L197.6,175.2 L199.9,209.0 L201.3,242.6 L200.2,275.5 L197.6,307.9 L196.0,340.6 L196.9,374.1 L199.5,408.2 L200.1,408.5 L198.2,374.5 L197.7,341.2 L199.7,308.6 L202.5,276.3 L203.5,243.3 L201.8,209.5 L199.0,175.5 L197.8,142.1Z" fill="#a6885a" opacity="0.10"/>
<path d="M308.1,35.7 L305.0,80.2 L302.3,124.9 L299.9,169.6 L297.8,214.4 L295.8,259.2 L293.8,304.1 L291.8,348.9 L289.6,393.8 L290.9,394.2 L294.3,349.8 L297.5,305.2 L300.3,260.5 L302.6,215.7 L304.6,170.7 L306.3,125.8 L307.9,80.9 L309.7,36.0Z" fill="#a6885a" opacity="0.09"/>
<path d="M163.5,192.0 L164.1,209.3 L164.7,226.6 L165.3,243.9 L165.7,261.2 L165.8,278.4 L165.8,295.5 L165.7,312.6 L165.6,329.7 L165.9,329.8 L166.3,312.8 L166.7,295.8 L166.9,278.7 L166.8,261.5 L166.4,244.3 L165.6,226.9 L164.7,209.5 L163.8,192.1Z" fill="#a6885a" opacity="0.11"/>
<path d="M119.0,94.9 L119.1,125.9 L119.7,156.9 L120.9,188.1 L122.7,219.4 L124.8,250.9 L126.8,282.4 L128.5,313.7 L129.6,345.0 L130.0,345.1 L129.2,314.0 L127.8,282.7 L126.0,251.3 L124.0,219.8 L122.2,188.4 L120.8,157.2 L120.0,126.1 L119.4,95.0Z" fill="#a6885a" opacity="0.13"/>
<path d="M301.6,77.7 L296.1,117.0 L291.4,156.4 L289.0,196.3 L288.8,236.8 L288.9,277.5 L287.5,317.8 L284.4,357.6 L281.0,397.2 L282.7,397.8 L287.8,358.7 L292.3,319.3 L294.8,279.3 L295.2,238.6 L295.2,197.9 L296.6,157.7 L300.0,117.9 L303.6,78.1Z" fill="#d8c090" opacity="0.06"/>
<path d="M146.2,49.0 L146.6,95.7 L148.9,142.9 L152.0,190.4 L154.3,237.7 L155.1,284.5 L154.5,330.9 L153.9,377.2 L154.6,423.9 L155.2,424.2 L155.1,377.6 L156.2,331.5 L157.2,285.2 L156.7,238.3 L154.2,191.0 L150.8,143.4 L148.0,96.1 L147.0,49.2Z" fill="#a6885a" opacity="0.07"/>
<path d="M230.4,169.7 L227.9,201.1 L226.7,232.7 L226.9,264.8 L228.1,297.2 L229.2,329.6 L229.5,361.8 L228.7,393.6 L226.8,425.1 L227.4,425.3 L229.8,394.1 L231.2,362.4 L231.2,330.3 L230.2,297.9 L229.0,265.4 L228.5,233.2 L229.2,201.4 L231.1,169.9Z" fill="#d8c090" opacity="0.12"/>
<path d="M335.9,225.0 L334.0,245.4 L332.2,266.0 L330.7,286.5 L329.3,307.2 L328.0,327.8 L326.8,348.5 L325.5,369.2 L324.2,389.8 L324.4,389.9 L326.1,369.4 L327.5,348.8 L328.9,328.1 L330.3,307.5 L331.6,286.8 L333.0,266.2 L334.6,245.6 L336.2,225.0Z" fill="#a6885a" opacity="0.06"/>
<path d="M329.8,145.6 L326.6,164.6 L323.5,183.7 L320.9,202.9 L319.1,222.3 L318.1,241.9 L317.9,261.8 L318.2,281.8 L318.6,301.9 L319.7,302.2 L320.2,282.4 L320.8,262.6 L321.6,242.9 L322.8,223.3 L324.5,203.9 L326.5,184.5 L328.8,165.2 L331.0,145.8Z" fill="#a6885a" opacity="0.14"/>
<path d="M195.7,-31.6 L194.6,-3.9 L193.6,23.9 L193.1,51.7 L192.9,79.5 L193.1,107.5 L193.7,135.6 L194.6,163.7 L195.5,191.9 L196.0,192.1 L195.5,164.0 L195.1,135.9 L194.8,107.9 L194.7,80.0 L194.8,52.0 L195.1,24.2 L195.6,-3.7 L196.2,-31.5Z" fill="#a6885a" opacity="0.08"/>
<path d="M284.5,7.3 L282.0,37.7 L279.6,68.2 L277.5,98.6 L275.6,129.2 L274.1,159.8 L273.0,190.4 L272.2,221.2 L271.7,252.1 L272.2,252.3 L273.3,221.5 L274.6,190.9 L276.1,160.2 L277.7,129.7 L279.5,99.1 L281.3,68.5 L283.3,38.0 L285.2,7.4Z" fill="#a6885a" opacity="0.07"/>
<path d="M246.6,49.8 L242.8,98.4 L239.7,147.1 L238.1,196.1 L238.0,245.6 L238.4,295.3 L238.3,344.8 L237.2,394.1 L235.2,443.0 L236.5,443.5 L239.8,395.0 L242.0,346.1 L242.9,296.7 L242.9,247.0 L242.9,197.4 L243.8,148.1 L245.8,99.1 L248.2,50.1Z" fill="#a6885a" opacity="0.07"/>
<path d="M178.0,9.0 L179.8,51.7 L181.0,94.2 L180.8,136.5 L179.3,178.4 L177.7,220.2 L177.2,262.3 L178.4,304.8 L180.9,347.9 L182.1,348.3 L180.8,305.6 L180.7,263.3 L181.9,221.4 L183.9,179.6 L185.2,137.6 L184.8,95.1 L182.6,52.3 L179.5,9.3Z" fill="#a6885a" opacity="0.10"/>
<path d="M148.5,64.7 L148.1,82.4 L148.6,100.4 L150.0,118.5 L151.9,136.8 L153.7,155.1 L154.8,173.2 L155.2,191.2 L154.7,208.9 L155.0,208.9 L155.6,191.3 L155.5,173.4 L154.4,155.3 L152.7,137.0 L150.8,118.7 L149.3,100.5 L148.6,82.5 L148.7,64.8Z" fill="#d8c090" opacity="0.10"/>
<path d="M98.3,63.3 L98.5,80.2 L98.9,97.0 L99.5,113.9 L100.3,130.8 L101.4,147.9 L102.6,164.9 L104.0,182.0 L105.5,199.2 L106.8,199.6 L106.5,182.7 L106.2,165.9 L105.6,149.0 L104.8,132.0 L103.8,115.0 L102.6,97.9 L101.2,80.8 L99.7,63.7Z" fill="#d8c090" opacity="0.15"/>
<path d="M169.5,7.3 L169.0,25.0 L169.2,42.8 L170.0,60.7 L171.0,78.7 L171.9,96.7 L172.4,114.6 L172.5,132.4 L172.4,150.2 L173.7,150.5 L175.0,133.0 L175.9,115.5 L176.1,97.7 L175.5,79.8 L174.3,61.7 L172.8,43.6 L171.6,25.5 L170.9,7.6Z" fill="#d8c090" opacity="0.06"/>
<path d="M346.1,149.6 L345.1,187.5 L343.7,225.4 L338.9,262.3 L332.7,298.8 L329.2,336.1 L329.3,374.5 L329.4,413.0 L326.4,450.5 L328.3,451.2 L333.1,414.3 L334.6,376.2 L335.7,338.1 L339.7,300.9 L345.7,264.3 L349.5,226.9 L349.3,188.6 L348.4,150.1Z" fill="#a6885a" opacity="0.06"/>
<path d="M133.4,4.8 L133.9,33.1 L134.8,61.5 L136.2,90.1 L137.9,118.7 L139.8,147.4 L141.7,176.1 L143.3,204.8 L144.7,233.4 L146.4,233.9 L146.7,205.8 L146.4,177.4 L145.6,148.9 L144.1,120.2 L142.2,91.5 L139.9,62.7 L137.5,33.9 L135.3,5.2Z" fill="#a6885a" opacity="0.09"/>
<path d="M235.5,109.0 L235.1,144.9 L234.5,180.8 L233.9,216.7 L233.2,252.6 L232.4,288.4 L231.4,324.2 L230.4,360.0 L229.3,395.8 L230.2,396.1 L232.1,360.6 L233.9,325.0 L235.3,289.3 L236.4,253.5 L237.0,217.6 L237.2,181.5 L237.0,145.4 L236.6,109.2Z" fill="#a6885a" opacity="0.08"/>
<path d="M102.0,44.8 L102.7,76.5 L104.0,108.5 L105.9,140.5 L108.2,172.7 L110.5,204.8 L112.6,237.0 L114.3,269.1 L115.9,301.1 L117.6,301.6 L117.7,270.1 L117.4,238.5 L116.4,206.5 L114.5,174.4 L112.0,142.1 L109.2,109.7 L106.5,77.4 L104.0,45.2Z" fill="#a6885a" opacity="0.12"/>
<path d="M211.0,24.9 L209.8,67.9 L208.8,111.1 L208.1,154.2 L207.6,197.4 L207.3,240.7 L207.3,284.0 L207.4,327.4 L207.6,370.9 L209.0,371.4 L210.1,328.3 L211.2,285.2 L212.1,242.1 L212.7,198.8 L213.0,155.5 L213.1,112.1 L212.9,68.6 L212.7,25.2Z" fill="#a6885a" opacity="0.10"/>
<path d="M312.9,10.5 L310.7,43.5 L308.4,76.6 L306.2,109.6 L304.1,142.6 L302.1,175.7 L300.3,208.8 L298.7,241.9 L297.3,275.2 L298.4,275.5 L300.8,242.5 L303.3,209.6 L305.7,176.6 L308.0,143.6 L310.0,110.5 L311.7,77.3 L313.0,44.0 L314.2,10.8Z" fill="#a6885a" opacity="0.10"/>
<filter id="turb" x="0" y="0" width="100%" height="100%"><feTurbulence type="fractalNoise" baseFrequency="0.22 0.025" numOctaves="3" seed="4"/><feColorMatrix type="matrix" values="0 0 0 0 0.40  0 0 0 0 0.30  0 0 0 0 0.18  2.2 0 0 0 -1.05"/></filter>
<rect x="90" y="5" width="290" height="425" filter="url(#turb)" opacity="0.4"/>
<filter id="turb2" x="0" y="0" width="100%" height="100%"><feTurbulence type="fractalNoise" baseFrequency="0.18 0.02" numOctaves="2" seed="11"/><feColorMatrix type="matrix" values="0 0 0 0 0.86  0 0 0 0 0.72  0 0 0 0 0.52  2.2 0 0 0 -1.05"/></filter>
<rect x="90" y="5" width="290" height="425" filter="url(#turb2)" opacity="0.22"/>
<filter id="kb" x="-50%" y="-50%" width="200%" height="200%"><feGaussianBlur stdDeviation="0.9"/></filter>
<filter id="kb2" x="-50%" y="-50%" width="200%" height="200%"><feGaussianBlur stdDeviation="3"/></filter>
<ellipse cx="250" cy="284" rx="12" ry="15" fill="#d4b684" opacity="0.35" filter="url(#kb2)"/>
<ellipse cx="320" cy="150" rx="12" ry="26" fill="#d4b684" opacity="0.35" filter="url(#kb2)"/>
<ellipse cx="262" cy="314" rx="9" ry="9" fill="#d4b684" opacity="0.35" filter="url(#kb2)"/>
<path d="M266,88 L274,88 L276,150 L268,150Z" fill="#a4845a" opacity="0.25" filter="url(#kb2)"/>
<g filter="url(#kb)" fill="#4a3624">
<path d="M311,123 Q317,120 324,124 L325,130 Q320,127 316,129 L319,142 L317,142 L313,129 Q311,127 311,123Z" opacity="0.85"/>
<ellipse cx="321" cy="121" rx="1" ry="1.5" opacity="0.8"/>
<ellipse cx="322" cy="163" rx="7" ry="15" fill="none" stroke="#6a5034" stroke-width="1" opacity="0.35"/>
<ellipse cx="322" cy="164" rx="4.5" ry="10" fill="none" stroke="#6a5034" stroke-width="1" opacity="0.4"/>
<ellipse cx="321.5" cy="165" rx="2" ry="6" fill="none" stroke="#6a5034" stroke-width="1" opacity="0.45"/>
<path d="M320,160 L321,173" stroke="#4a3624" stroke-width="1.2" opacity="0.6"/>
<path d="M322,124 L334.4,108.3" stroke="#8a6a48" stroke-width="0.8" opacity="0.35"/>
<path d="M322,124 L337.6,111.4" stroke="#8a6a48" stroke-width="0.8" opacity="0.35"/>
<path d="M322,124 L339.9,115.1" stroke="#8a6a48" stroke-width="0.8" opacity="0.35"/>
<path d="M322,124 L341.4,119.2" stroke="#8a6a48" stroke-width="0.8" opacity="0.35"/>
<path d="M322,124 L342.0,123.6" stroke="#8a6a48" stroke-width="0.8" opacity="0.35"/>
<path d="M322,124 L341.6,128.0" stroke="#8a6a48" stroke-width="0.8" opacity="0.35"/>
<path d="M256,304 Q263,302 268,309 L269,315 Q265,309 258,307Z" opacity="0.9"/>
<ellipse cx="262" cy="312" rx="2.5" ry="2" opacity="0.3"/>
</g>
<g fill="#3e2e1e">
<ellipse cx="116.5" cy="65.7" rx="1.2" ry="1.8" opacity="0.8"/>
<ellipse cx="163.2" cy="110.6" rx="1.2" ry="1.8" opacity="0.75"/>
<ellipse cx="184.6" cy="107" rx="1" ry="1.5" opacity="0.6"/>
<ellipse cx="162.5" cy="174.2" rx="1.8" ry="1.2" opacity="0.8"/>
<ellipse cx="271.7" cy="81.5" rx="1.8" ry="2" opacity="0.85"/>
<ellipse cx="236.8" cy="159.5" rx="0.8" ry="1" opacity="0.5"/>
<ellipse cx="123" cy="328" rx="1" ry="1.2" opacity="0.7"/>
<ellipse cx="182.4" cy="198.3" rx="1.2" ry="1.6" opacity="0.8"/>
<ellipse cx="198.2" cy="220" rx="1.6" ry="1.2" opacity="0.85"/>
<ellipse cx="200.3" cy="201" rx="0.8" ry="0.8" opacity="0.5"/>
<ellipse cx="246" cy="274.5" rx="2.2" ry="1.2" opacity="0.55"/>
<ellipse cx="259" cy="277" rx="1.5" ry="3" opacity="0.8"/>
<ellipse cx="255.3" cy="352.5" rx="2" ry="1.4" opacity="0.75"/>
<ellipse cx="255" cy="351" rx="5" ry="4" opacity="0.15"/>
</g>
</g>
<!--/WOOD-->
 <polygon points="98,13 102,9 370,66 367,70" fill="#ae8c60"/>
 <polygon points="367,70 370,66 341,419.5 337,424" fill="#b69264"/>
 <polyline points="98,13 102,9 370,66 341,419.5 337,424 114,345 98,13 367,70 337,424" fill="none" stroke="#000" stroke-width="1.5" stroke-linejoin="round"/>
 <line x1="357.2" y1="65" x2="328.8" y2="421" stroke="#000" stroke-width="2.4"/>
</svg>
</div>
<div id="sep"></div>
<div id="panel"></div>
<div id="hdr" class="abs"><div class="tri"></div><div class="ttl">Layers</div></div>
<div id="close" class="abs"><svg width="14" height="13" viewBox="0 0 14 13" style="position:absolute;left:0;top:0"><path d="M3.8,5.6 L8.8,9.9 M8.8,5.6 L3.8,9.9" stroke="#000" stroke-width="1.5"/><circle cx="6.3" cy="7.75" r="1.2" fill="#000"/></svg></div>
<svg class="abs" style="left:454px;top:22px" width="241" height="22" viewBox="454 22 241 22">
 <circle cx="468.5" cy="32.8" r="6.8" fill="none" stroke="#000" stroke-width="1.5"/>
 <line x1="464.5" y1="32.8" x2="472.5" y2="32.8" stroke="#000" stroke-width="2"/>
 <line x1="468.5" y1="28.8" x2="468.5" y2="36.8" stroke="#000" stroke-width="2"/>
 <circle cx="491.8" cy="32.8" r="6.8" fill="none" stroke="#000" stroke-width="1.5"/>
 <line x1="487.8" y1="32.8" x2="495.8" y2="32.8" stroke="#000" stroke-width="2"/>
 <polygon points="679,25 688.5,32.5 679,40.5" fill="#000"/>
 <rect x="674.5" y="27.8" width="8" height="10" fill="#000"/>
 <rect x="675.5" y="28.8" width="6" height="3" fill="#4a8ee0"/>
 <rect x="675.5" y="31.8" width="6" height="5" fill="#f4f4f4"/>
 <rect x="676.5" y="33" width="4" height="1" fill="#444"/>
 <rect x="676.5" y="35" width="4" height="1" fill="#444"/>
</svg>
<div id="colhdr" class="abs">
 <div class="ch" style="left:0;width:148px"></div>
 <div class="ch" style="left:149px;width:49px"></div>
 <div class="ch" style="left:199px;width:40px"></div>
 <div class="abs" style="left:147px;top:0;width:2px;height:15px;background:#8a8a8a"></div>
 <div class="abs" style="left:197px;top:0;width:2px;height:15px;background:#8a8a8a"></div>
 <div class="abs" style="left:237px;top:0;width:2px;height:15px;background:#8a8a8a"></div>
 <div class="txt" style="left:5px;top:2px">Name</div>
 <div class="txt" style="left:154px;top:2px;letter-spacing:-0.45px">Visible</div>
 <div class="txt" style="left:204px;top:2px">Color</div>
</div>
<div class="row" style="top:66px"><div class="radio on"></div><div class="lbl" style="color:#000">Layer0</div><div class="cb"><svg width="9" height="9" viewBox="0 0 9 9" style="position:absolute;left:0;top:0"><polyline points="1.2,5.2 3.5,7.5 7.9,2.3" fill="none" stroke="#222" stroke-width="1.3"/></svg></div><div class="sw" style="background:#ff5a5a"></div></div>
<div class="row" style="top:83px"><div class="radio"></div><div class="lbl" style="color:#000">Габаритная рамка</div><div class="cb"></div><div class="sw" style="background:#000000"></div></div>
<div class="row" style="top:100px"><div class="radio"></div><div class="abs" style="left:18px;top:0;width:221px;height:17px;background:#3399ff"></div><div class="abs" style="left:166px;top:0;width:16px;height:16px;background:#fff"></div><div class="lbl" style="color:#fff">Отображение торцов</div><div class="cb"><svg width="9" height="9" viewBox="0 0 9 9" style="position:absolute;left:0;top:0"><polyline points="1.2,5.2 3.5,7.5 7.9,2.3" fill="none" stroke="#222" stroke-width="1.3"/></svg></div><div class="sw" style="background:#ffc800"></div></div>
<div class="row" style="top:117px"><div class="radio"></div><div class="lbl" style="color:#000">Отображение кромки</div><div class="cb"></div><div class="sw" style="background:#ffee00"></div></div>
<div class="row" style="top:134px"><div class="radio"></div><div class="lbl" style="color:#000">Отображение граней</div><div class="cb"><svg width="9" height="9" viewBox="0 0 9 9" style="position:absolute;left:0;top:0"><polyline points="1.2,5.2 3.5,7.5 7.9,2.3" fill="none" stroke="#222" stroke-width="1.3"/></svg></div><div class="sw" style="background:#ff5a5a"></div></div>
<div class="row" style="top:151px"><div class="radio"></div><div class="lbl" style="color:#000">Панели</div><div class="cb"><svg width="9" height="9" viewBox="0 0 9 9" style="position:absolute;left:0;top:0"><polyline points="1.2,5.2 3.5,7.5 7.9,2.3" fill="none" stroke="#222" stroke-width="1.3"/></svg></div><div class="sw" style="background:#ff0000"></div></div>
<div class="abs" style="left:454px;top:429px;width:239px;height:5px;border:1px solid #aaa;background:#fff"></div>
<div class="abs" style="left:454px;top:435px;width:239px;height:1px;background:#aaa"></div>
<div class="abs" style="left:694px;top:139px;width:1px;height:17px;background:#b4b4b4"></div>
</body></html>
